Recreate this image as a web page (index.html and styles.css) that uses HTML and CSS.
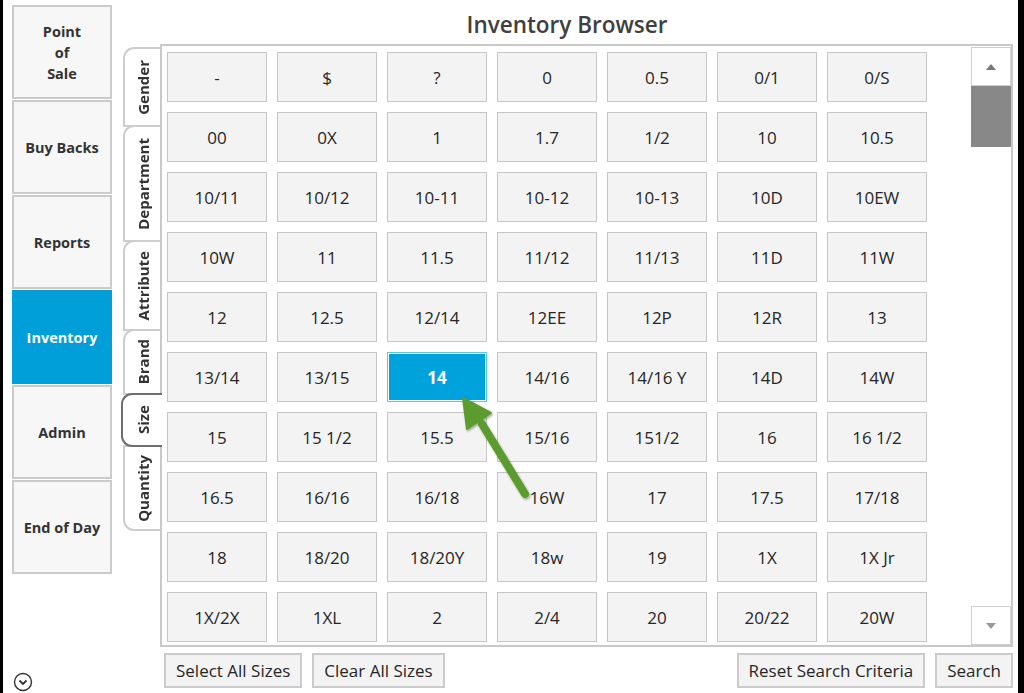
FILE: index.html
```html
<!DOCTYPE html>
<html lang="en">
<head>
  <meta charset="UTF-8" />
  <meta name="viewport" content="width=device-width, initial-scale=1.0"/>
  <title>Inventory Browser</title>
  <link rel="stylesheet" href="styles.css">
</head>
<body>
  <div class="app">
    <div class="sidebar">
      <div class="nav-btn">Point<br>of<br>Sale</div>
      <div class="nav-btn">Buy Backs</div>
      <div class="nav-btn">Reports</div>
      <div class="nav-btn active">Inventory</div>
      <div class="nav-btn">Admin</div>
      <div class="nav-btn">End of Day</div>
      <div class="more">
        <svg width="20" height="20" viewBox="0 0 20 20">
          <circle cx="10" cy="10" r="8.5" fill="none" stroke="#333" stroke-width="1.4"/>
          <path d="M6.5 8.5 L10 12 L13.5 8.5" fill="none" stroke="#333" stroke-width="1.8"/>
        </svg>
      </div>
    </div>

    <div class="content">
      <h1 class="title">Inventory Browser</h1>
      <div class="browser">
        <div class="tabs">
          <div class="tab tab-gender"><span>Gender</span></div>
          <div class="tab tab-dept"><span>Department</span></div>
          <div class="tab tab-attr"><span>Attribute</span></div>
          <div class="tab tab-brand"><span>Brand</span></div>
          <div class="tab tab-size selected"><span>Size</span></div>
          <div class="tab tab-qty last"><span>Quantity</span></div>
        </div>
        <div class="panel">
          <div class="grid" id="grid"></div>
          <div class="scrollbar">
            <div class="scroll-btn"><span class="arrow up"></span></div>
            <div class="thumb"></div>
            <div class="track"></div>
            <div class="scroll-btn"><span class="arrow down"></span></div>
          </div>
        </div>
      </div>
      <div class="footer">
        <button class="btn">Select All Sizes</button>
        <button class="btn">Clear All Sizes</button>
        <div class="spacer"></div>
        <button class="btn">Reset Search Criteria</button>
        <button class="btn">Search</button>
      </div>
    </div>

    <svg class="pointer" width="90" height="120" viewBox="0 0 90 120">
      <defs>
        <filter id="sh" x="-20%" y="-20%" width="140%" height="140%">
          <feDropShadow dx="1" dy="1.5" stdDeviation="1" flood-color="#000" flood-opacity="0.35"/>
        </filter>
      </defs>
      <g filter="url(#sh)">
        <line x1="70" y1="103" x2="27" y2="33" stroke="#5c9c2e" stroke-width="8" stroke-linecap="round"/>
        <polygon points="8,7 12,38 36,22" fill="#5c9c2e" stroke="#5c9c2e" stroke-width="2" stroke-linejoin="round"/>
      </g>
    </svg>
  </div>

  <script>
    const sizes = [
      "-", "$", "?", "0", "0.5", "0/1", "0/S",
      "00", "0X", "1", "1.7", "1/2", "10", "10.5",
      "10/11", "10/12", "10-11", "10-12", "10-13", "10D", "10EW",
      "10W", "11", "11.5", "11/12", "11/13", "11D", "11W",
      "12", "12.5", "12/14", "12EE", "12P", "12R", "13",
      "13/14", "13/15", "14", "14/16", "14/16 Y", "14D", "14W",
      "15", "15 1/2", "15.5", "15/16", "151/2", "16", "16 1/2",
      "16.5", "16/16", "16/18", "16W", "17", "17.5", "17/18",
      "18", "18/20", "18/20Y", "18w", "19", "1X", "1X Jr",
      "1X/2X", "1XL", "2", "2/4", "20", "20/22", "20W"
    ];
    const grid = document.getElementById("grid");
    sizes.forEach((s) => {
      const cell = document.createElement("div");
      cell.className = "cell" + (s === "14" ? " active" : "");
      cell.textContent = s;
      grid.appendChild(cell);
    });
  </script>
</body>
</html>
```

FILE: styles.css
```css
* {
  box-sizing: border-box;
}
body {
  margin: 0;
  background-color: #fff;
  font-family: "Open Sans", "Noto Sans", sans-serif;
  color: #333;
}
.app {
  position: relative;
  display: flex;
  width: 1024px;
  height: 693px;
  border-left: 3px solid #000;
  border-right: 6px solid #000;
  overflow: hidden;
}
.sidebar {
  width: 100px;
  margin-left: 9px;
  padding-top: 5px;
  display: flex;
  flex-direction: column;
  gap: 1px;
}
.nav-btn {
  height: 94px;
  display: flex;
  align-items: center;
  justify-content: center;
  text-align: center;
  background-color: #f7f7f7;
  border: 2px solid #cbcbcb;
  font-size: 14.5px;
  font-weight: 700;
  line-height: 21px;
  color: #333;
}
.nav-btn.active {
  background-color: #009fda;
  border-color: #009fda;
  color: #fff;
}
.more {
  margin-top: auto;
  padding: 0 0 1px 1px;
  line-height: 0;
}
.content {
  flex: 1;
  margin-left: 9px;
  margin-right: 5px;
  display: flex;
  flex-direction: column;
}
.title {
  margin: 0;
  height: 44px;
  line-height: 50px;
  text-align: center;
  font-size: 22.5px;
  font-weight: 600;
  color: #404040;
}
.browser {
  display: flex;
  height: 603px;
}
.tabs {
  width: 39px;
  padding-top: 3px;
  display: flex;
  flex-direction: column;
  align-items: flex-end;
  position: relative;
  z-index: 1;
}
.tab {
  width: 37px;
  margin-top: -2px;
  background-color: #fff;
  border: 2px solid #cdcdcd;
  border-right: none;
  border-radius: 11px 0 0 0;
  display: flex;
  align-items: center;
  justify-content: center;
}
.tab:first-child {
  margin-top: 0;
}
.tab-gender { height: 80px; }
.tab-dept { height: 117px; }
.tab-attr { height: 91px; }
.tab-brand { height: 66px; }
.tab-size { height: 54px; }
.tab-qty { height: 86px; }
.tab span {
  writing-mode: vertical-rl;
  transform: rotate(180deg);
  font-size: 15px;
  font-weight: 700;
  color: #333;
}
.tab.selected {
  width: 41px;
  margin-right: -2px;
  border-color: #6e6e6e;
  border-radius: 11px 0 0 11px;
  position: relative;
  z-index: 2;
}
.tab.last {
  border-radius: 0 0 0 11px;
}
.panel {
  flex: 1;
  display: flex;
  border: 2px solid #c9c9c9;
  overflow: hidden;
}
.grid {
  flex: 1;
  padding: 6px 0 0 5px;
  display: grid;
  grid-template-columns: repeat(7, 100px);
  grid-auto-rows: 50px;
  gap: 10px;
  align-content: start;
}
.cell {
  display: flex;
  align-items: center;
  justify-content: center;
  background-color: #f3f3f3;
  border: 1px solid #c6c6c6;
  font-size: 17px;
  color: #262626;
}
.cell.active {
  background-color: #00a2db;
  border-color: #5cc5ea;
  box-shadow: inset 0 0 0 1px #fff;
  color: #fff;
  font-weight: 700;
}
.scrollbar {
  width: 40px;
  padding-top: 1px;
  display: flex;
  flex-direction: column;
}
.scroll-btn {
  height: 39px;
  border: 1px solid #cfcfcf;
  background-color: #fff;
  display: flex;
  align-items: center;
  justify-content: center;
}
.thumb {
  height: 61px;
  background-color: #888;
}
.track {
  flex: 1;
}
.arrow {
  width: 0;
  height: 0;
  border-left: 5px solid transparent;
  border-right: 5px solid transparent;
}
.arrow.up {
  border-bottom: 6px solid #777;
}
.arrow.down {
  border-top: 6px solid #999;
}
.footer {
  display: flex;
  gap: 10px;
  padding: 6px 0 0 43px;
}
.spacer {
  flex: 1;
}
.btn {
  height: 35px;
  padding: 0 10px;
  background-color: #f3f3f3;
  border: 2px solid #cbcbcb;
  font-family: inherit;
  font-size: 17px;
  color: #262626;
}
.pointer {
  position: absolute;
  left: 452px;
  top: 391px;
}
```
